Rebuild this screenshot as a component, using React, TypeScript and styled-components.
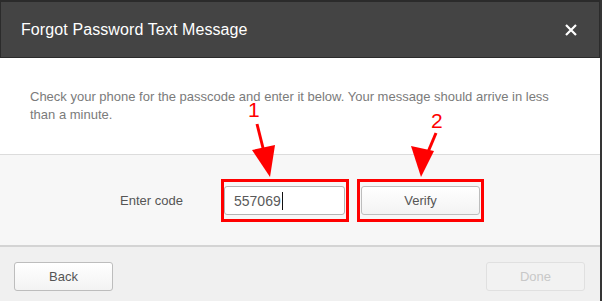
import React from 'react'
import styled, { createGlobalStyle } from 'styled-components'

const GlobalStyle = createGlobalStyle`
  html, body {
    margin: 0;
    padding: 0;
    background: #353535;
  }
  body {
    font-family: 'Liberation Sans', Arial, sans-serif;
  }
`

const Page = styled.div`
  position: relative;
  width: 602px;
  height: 301px;
  overflow: hidden;
`

const Modal = styled.div`
  width: 600px;
  height: 301px;
  background: #fff;
  display: flex;
  flex-direction: column;
`

const Header = styled.div`
  height: 58px;
  box-sizing: border-box;
  background: #444444;
  border: 1px solid #2b2b2b;
  border-top-width: 2px;
  display: flex;
  align-items: center;
  justify-content: space-between;
  padding: 0 22px 0 20px;
`

const Title = styled.h1`
  margin: 0;
  font-size: 16px;
  font-weight: normal;
  color: #ffffff;
  letter-spacing: 0.1px;
`

const CloseButton = styled.button`
  border: 0;
  padding: 0;
  background: transparent;
  width: 12px;
  height: 12px;
  display: flex;
  cursor: pointer;
`

const Intro = styled.p`
  margin: 0;
  height: 97px;
  box-sizing: border-box;
  padding: 30px 30px 0 30px;
  font-size: 13px;
  line-height: 18px;
  color: #7b7b7b;
  border-bottom: 1px solid #dcdcdc;
`

const CodeRow = styled.div`
  height: 92px;
  box-sizing: border-box;
  background: #f7f7f7;
  border-bottom: 2px solid #d4d4d4;
  display: flex;
  align-items: center;
  padding: 1px 0 0 120px;
`

const Label = styled.label`
  width: 101px;
  font-size: 13px;
  color: #555;
`

const Highlight = styled.div<{ $gap?: number }>`
  display: flex;
  border: 3px solid #ff0000;
  padding: 4px 1px 4px ${p => p.$gap ?? 0}px;
  margin-right: 8px;
`

const CodeInput = styled.div`
  width: 121px;
  height: 29px;
  box-sizing: border-box;
  background: #fff;
  border: 1px solid #b4b4b4;
  border-radius: 3px;
  display: flex;
  align-items: center;
  padding-left: 9px;
  font-size: 14px;
  color: #5a5a5a;
`

const Caret = styled.span`
  display: inline-block;
  width: 1px;
  height: 18px;
  background: #111;
  margin-left: 1px;
`

const Button = styled.button<{ $disabled?: boolean; $width?: number }>`
  width: ${p => p.$width ?? 99}px;
  height: 29px;
  box-sizing: border-box;
  border-radius: 3px;
  font-family: inherit;
  font-size: 13px;
  cursor: pointer;
  border: 1px solid ${p => (p.$disabled ? '#e0e0e0' : '#bdbdbd')};
  color: ${p => (p.$disabled ? '#c8c8c8' : '#555')};
  background: ${p =>
    p.$disabled ? '#f2f2f2' : 'linear-gradient(#ffffff, #f3f3f3)'};
`

const Footer = styled.div`
  flex: 1;
  background: #f0f0f0;
  display: flex;
  justify-content: space-between;
  align-items: flex-start;
  padding: 15px 15px 0 14px;
`

const Overlay = styled.svg`
  position: absolute;
  left: 0;
  top: 0;
  pointer-events: none;
`

const Step = styled.span<{ $x: number; $y: number }>`
  position: absolute;
  left: ${p => p.$x}px;
  top: ${p => p.$y}px;
  font-size: 21px;
  line-height: 1;
  color: #ff0000;
`

const App: React.FC = () => {
  return (
    <Page>
      <GlobalStyle />
      <Modal>
        <Header>
          <Title>Forgot Password Text Message</Title>
          <CloseButton aria-label="Close">
            <svg width="12" height="12" viewBox="0 0 12 12">
              <path d="M1 1 L11 11 M11 1 L1 11" stroke="#fff" strokeWidth="2.2" />
            </svg>
          </CloseButton>
        </Header>
        <Intro>
          Check your phone for the passcode and enter it below. Your message should arrive in less
          than a minute.
        </Intro>
        <CodeRow>
          <Label>Enter code</Label>
          <Highlight>
            <CodeInput>
              557069
              <Caret />
            </CodeInput>
          </Highlight>
          <Highlight $gap={1}>
            <Button $width={119}>Verify</Button>
          </Highlight>
        </CodeRow>
        <Footer>
          <Button>Back</Button>
          <Button $disabled>Done</Button>
        </Footer>
      </Modal>
      <Overlay width="602" height="301">
        <line x1="257" y1="124" x2="264" y2="152" stroke="#ff0000" strokeWidth="3" />
        <polygon points="275,145 252,150 270,177" fill="#ff0000" />
        <line x1="436" y1="133" x2="428" y2="152" stroke="#ff0000" strokeWidth="3" />
        <polygon points="411,146 434,151 421,177" fill="#ff0000" />
      </Overlay>
      <Step $x={248} $y={99}>1</Step>
      <Step $x={431} $y={110}>2</Step>
    </Page>
  )
}

export default App
